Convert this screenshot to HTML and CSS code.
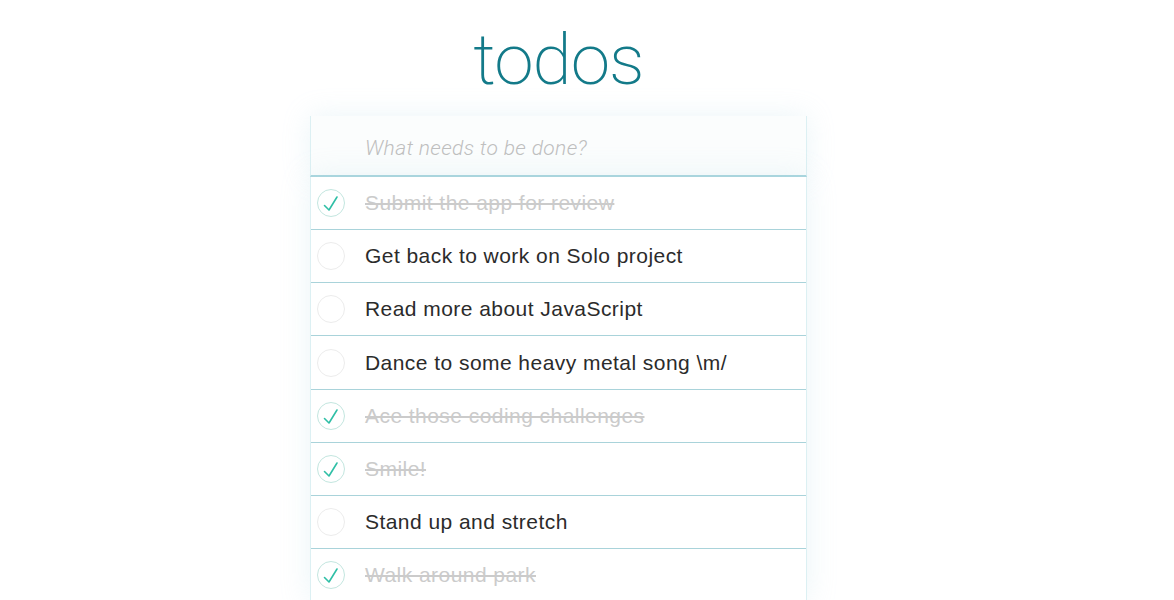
FILE: index.html
```html
<!DOCTYPE html>
<html lang="en">
<head>
<meta charset="utf-8">
<title>todos</title>
<link rel="stylesheet" href="styles.css">
</head>
<body>
<div class="page">
  <section class="todoapp">
    <header class="header">
      <h1 class="title">todos</h1>
      <input class="new-todo" type="text" placeholder="What needs to be done?">
    </header>
    <ul class="todo-list">
      <li class="todo done">
        <svg class="toggle" viewBox="0 0 40 40" width="40" height="40"><circle cx="20" cy="20" r="13.5" fill="none" stroke="#c3e6df" stroke-width="1"/><path d="M13.5 22.5 L18 27 L26 14" fill="none" stroke="#2fbfa6" stroke-width="1.6" stroke-linecap="round" stroke-linejoin="round"/></svg>
        <span class="label">Submit the app for review</span>
      </li>
      <li class="todo">
        <svg class="toggle" viewBox="0 0 40 40" width="40" height="40"><circle cx="20" cy="20" r="13.5" fill="none" stroke="#ececec" stroke-width="1"/></svg>
        <span class="label">Get back to work on Solo project</span>
      </li>
      <li class="todo">
        <svg class="toggle" viewBox="0 0 40 40" width="40" height="40"><circle cx="20" cy="20" r="13.5" fill="none" stroke="#ececec" stroke-width="1"/></svg>
        <span class="label">Read more about JavaScript</span>
      </li>
      <li class="todo">
        <svg class="toggle" viewBox="0 0 40 40" width="40" height="40"><circle cx="20" cy="20" r="13.5" fill="none" stroke="#ececec" stroke-width="1"/></svg>
        <span class="label">Dance to some heavy metal song \m/</span>
      </li>
      <li class="todo done">
        <svg class="toggle" viewBox="0 0 40 40" width="40" height="40"><circle cx="20" cy="20" r="13.5" fill="none" stroke="#c3e6df" stroke-width="1"/><path d="M13.5 22.5 L18 27 L26 14" fill="none" stroke="#2fbfa6" stroke-width="1.6" stroke-linecap="round" stroke-linejoin="round"/></svg>
        <span class="label">Ace those coding challenges</span>
      </li>
      <li class="todo done">
        <svg class="toggle" viewBox="0 0 40 40" width="40" height="40"><circle cx="20" cy="20" r="13.5" fill="none" stroke="#c3e6df" stroke-width="1"/><path d="M13.5 22.5 L18 27 L26 14" fill="none" stroke="#2fbfa6" stroke-width="1.6" stroke-linecap="round" stroke-linejoin="round"/></svg>
        <span class="label">Smile!</span>
      </li>
      <li class="todo">
        <svg class="toggle" viewBox="0 0 40 40" width="40" height="40"><circle cx="20" cy="20" r="13.5" fill="none" stroke="#ececec" stroke-width="1"/></svg>
        <span class="label">Stand up and stretch</span>
      </li>
      <li class="todo done">
        <svg class="toggle" viewBox="0 0 40 40" width="40" height="40"><circle cx="20" cy="20" r="13.5" fill="none" stroke="#c3e6df" stroke-width="1"/><path d="M13.5 22.5 L18 27 L26 14" fill="none" stroke="#2fbfa6" stroke-width="1.6" stroke-linecap="round" stroke-linejoin="round"/></svg>
        <span class="label">Walk around park</span>
      </li>
    </ul>
  </section>
</div>
</body>
</html>
```
FILE: styles.css
```css
html, body {
  margin: 0;
  padding: 0;
  background: #ffffff;
  overflow: hidden;
}

body {
  font-family: "Liberation Sans", Arial, sans-serif;
  color: #333333;
}

.page {
  padding-left: 310px;
}

.todoapp {
  width: 497px;
  display: flex;
  flex-direction: column;
}

.header {
  display: flex;
  flex-direction: column;
}

.title {
  margin: 0;
  height: 116px;
  box-sizing: border-box;
  padding-top: 17px;
  text-align: center;
  font-family: Roboto, "Liberation Sans", sans-serif;
  font-weight: 200;
  font-size: 71px;
  line-height: 86px;
  color: #137a89;
  letter-spacing: -1px;
}

.new-todo {
  display: block;
  box-sizing: border-box;
  width: 100%;
  height: 61px;
  margin: 0;
  padding: 4px 0 0 54px;
  border: none;
  border-left: 1px solid #dcf0f3;
  border-right: 1px solid #dcf0f3;
  border-bottom: 2px solid #a9d6de;
  background: #fbfdfd;
  font-family: Roboto, "Liberation Sans", sans-serif;
  font-size: 21px;
  font-weight: 300;
  letter-spacing: 0.35px;
  color: #333333;
  outline: none;
  box-shadow: 0 0 28px rgba(170, 215, 225, 0.24);
}

.new-todo::placeholder {
  font-style: italic;
  font-weight: 300;
  color: #bfbfbf;
}

.todo-list {
  list-style: none;
  margin: 0;
  padding: 0;
  background: #ffffff;
  border-left: 1px solid #dcf0f3;
  border-right: 1px solid #dcf0f3;
  box-shadow: 0 0 28px rgba(170, 215, 225, 0.24);
}

.todo {
  display: flex;
  align-items: center;
  height: 52.17px;
  border-bottom: 1px solid #a9d3da;
}

.toggle {
  flex: none;
  display: block;
}

.label {
  margin-left: 14px;
  font-size: 21px;
  line-height: 24px;
  letter-spacing: 0.45px;
  color: #2b2b2b;
  white-space: nowrap;
}

.done .label {
  color: #cbcbcb;
  text-decoration: line-through;
}
```
